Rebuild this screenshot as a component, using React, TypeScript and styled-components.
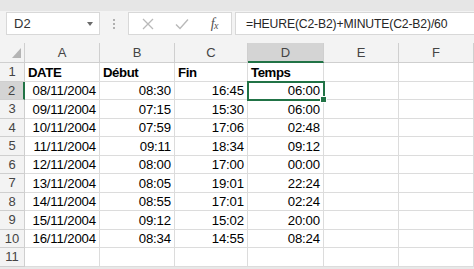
import * as React from 'react';
import styled, { createGlobalStyle, css } from 'styled-components';

const GREEN = '#217346';
const GRID = '#dcdcdc';
const HEAD_LINE = '#cfcfcf';

const COLS = ['A', 'B', 'C', 'D', 'E', 'F'];
const COL_WIDTHS = [25, 75, 75, 73, 76, 75, 75];

const ROWS: string[][] = [
  ['DATE', 'Début', 'Fin', 'Temps', '', ''],
  ['08/11/2004', '08:30', '16:45', '06:00', '', ''],
  ['09/11/2004', '07:15', '15:30', '06:00', '', ''],
  ['10/11/2004', '07:59', '17:06', '02:48', '', ''],
  ['11/11/2004', '09:11', '18:34', '09:12', '', ''],
  ['12/11/2004', '08:00', '17:00', '00:00', '', ''],
  ['13/11/2004', '08:05', '19:01', '22:24', '', ''],
  ['14/11/2004', '08:55', '17:01', '02:24', '', ''],
  ['15/11/2004', '09:12', '15:02', '20:00', '', ''],
  ['16/11/2004', '08:34', '14:55', '08:24', '', ''],
  ['', '', '', '', '', ''],
];

const GlobalStyle = createGlobalStyle`
  html, body {
    margin: 0;
    padding: 0;
    background: #ffffff;
  }
  body {
    font-family: "Liberation Sans", Arial, sans-serif;
  }
`;

const Page = styled.div`
  width: 474px;
  height: 269px;
  overflow: hidden;
  background: #f3f3f3;
  display: flex;
  flex-direction: column;
`;

const TopStrip = styled.div`
  height: 11px;
  background: #e6e6e6;
  flex-shrink: 0;
`;

const FormulaRow = styled.div`
  height: 25px;
  display: flex;
  align-items: center;
  padding-left: 6px;
  flex-shrink: 0;
`;

const Box = styled.div`
  height: 23px;
  box-sizing: border-box;
  background: #ffffff;
  border: 1px solid #d8d8d8;
  display: flex;
  align-items: center;
`;

const NameBox = styled(Box)`
  width: 94px;
  padding: 0 6px 0 7px;
  justify-content: space-between;
  font-size: 13px;
  color: #333;
`;

const DropArrow = styled.span`
  width: 0;
  height: 0;
  border-left: 3.5px solid transparent;
  border-right: 3.5px solid transparent;
  border-top: 4px solid #6a6a6a;
`;

const Grip = styled.div`
  width: 28px;
  display: flex;
  flex-direction: column;
  align-items: center;
  gap: 2px;
`;

const Dot = styled.span`
  width: 2px;
  height: 2px;
  background: #b0b0b0;
`;

const ButtonBox = styled(Box)`
  width: 104px;
  margin-right: 3px;
  padding: 0 13px 0 13px;
  justify-content: space-between;
`;

const Fx = styled.span`
  font-family: "Liberation Serif", "Times New Roman", serif;
  font-style: italic;
  font-size: 14px;
  color: #505050;
  letter-spacing: -0.5px;

  sub {
    font-size: 10px;
    vertical-align: baseline;
    position: relative;
    top: 1px;
  }
`;

const FormulaInput = styled(Box)`
  flex: 1;
  border-right: none;
  padding-left: 10px;
  font-size: 12.2px;
  letter-spacing: -0.15px;
  color: #262626;
`;

const Spacer = styled.div`
  height: 7px;
  flex-shrink: 0;
`;

const Sheet = styled.div`
  display: grid;
  grid-template-columns: ${COL_WIDTHS.map((w) => `${w}px`).join(' ')};
  grid-template-rows: 20px repeat(11, 18.5px);
  background: #ffffff;
  flex-shrink: 0;
`;

const HeadCell = styled.div<{ $active?: boolean }>`
  box-sizing: border-box;
  display: flex;
  align-items: center;
  justify-content: center;
  background: ${(p) => (p.$active ? '#d4d4d4' : '#f3f3f3')};
  border-right: 1px solid ${HEAD_LINE};
  border-bottom: ${(p) => (p.$active ? `2px solid ${GREEN}` : `1px solid ${HEAD_LINE}`)};
  font-size: 13px;
  color: #444;
  padding-top: ${(p) => (p.$active ? '1px' : '0')};
`;

const Corner = styled(HeadCell)`
  align-items: flex-end;
  justify-content: flex-end;
  padding: 0 3px 4px 0;
`;

const RowHead = styled.div<{ $active?: boolean }>`
  box-sizing: border-box;
  display: flex;
  align-items: center;
  justify-content: center;
  background: ${(p) => (p.$active ? '#d4d4d4' : '#f3f3f3')};
  border-bottom: 1px solid ${HEAD_LINE};
  border-right: ${(p) => (p.$active ? `2px solid ${GREEN}` : `1px solid ${HEAD_LINE}`)};
  font-size: 13px;
  color: #444;
`;

const Cell = styled.div<{ $bold?: boolean; $right?: boolean; $selected?: boolean }>`
  position: relative;
  box-sizing: border-box;
  display: flex;
  align-items: center;
  justify-content: ${(p) => (p.$right ? 'flex-end' : 'flex-start')};
  padding: 1px 3px 0 3px;
  border-right: 1px solid ${GRID};
  border-bottom: 1px solid ${GRID};
  font-size: 13.2px;
  letter-spacing: ${(p) => (p.$bold ? '-0.4px' : '-0.15px')};
  font-weight: ${(p) => (p.$bold ? 700 : 400)};
  color: #000;
  white-space: nowrap;

  ${(p) =>
    p.$selected &&
    css`
      outline: 2px solid ${GREEN};
      outline-offset: -1px;
      z-index: 1;

      &::after {
        content: '';
        position: absolute;
        right: -4px;
        bottom: -4px;
        width: 5px;
        height: 5px;
        background: ${GREEN};
        border: 1px solid #ffffff;
      }
    `}
`;

const BottomStrip = styled.div`
  flex: 1;
  background: #e8e8e8;
`;

export default function App() {
  return (
    <Page>
      <GlobalStyle />
      <TopStrip />
      <FormulaRow>
        <NameBox>
          D2
          <DropArrow />
        </NameBox>
        <Grip>
          <Dot />
          <Dot />
          <Dot />
        </Grip>
        <ButtonBox>
          <svg width="12" height="12" viewBox="0 0 12 12">
            <path d="M1 1 L11 11 M11 1 L1 11" stroke="#b9b9b9" strokeWidth="1.3" fill="none" />
          </svg>
          <svg width="14" height="12" viewBox="0 0 14 12">
            <path d="M1 6.5 L5 10.5 L13 1.5" stroke="#b9b9b9" strokeWidth="1.4" fill="none" />
          </svg>
          <Fx>
            f<sub>x</sub>
          </Fx>
        </ButtonBox>
        <FormulaInput>=HEURE(C2-B2)+MINUTE(C2-B2)/60</FormulaInput>
      </FormulaRow>
      <Spacer />
      <Sheet>
        <Corner>
          <svg width="9" height="10" viewBox="0 0 9 10">
            <polygon points="9,0 9,10 0,10" fill="#b4b4b4" />
          </svg>
        </Corner>
        {COLS.map((c) => (
          <HeadCell key={c} $active={c === 'D'}>
            {c}
          </HeadCell>
        ))}
        {ROWS.map((row, r) => (
          <React.Fragment key={r}>
            <RowHead $active={r === 1}>{r + 1}</RowHead>
            {row.map((v, c) => (
              <Cell
                key={c}
                $bold={r === 0}
                $right={r > 0}
                $selected={r === 1 && c === 3}
              >
                {v}
              </Cell>
            ))}
          </React.Fragment>
        ))}
      </Sheet>
      <BottomStrip />
    </Page>
  );
}
